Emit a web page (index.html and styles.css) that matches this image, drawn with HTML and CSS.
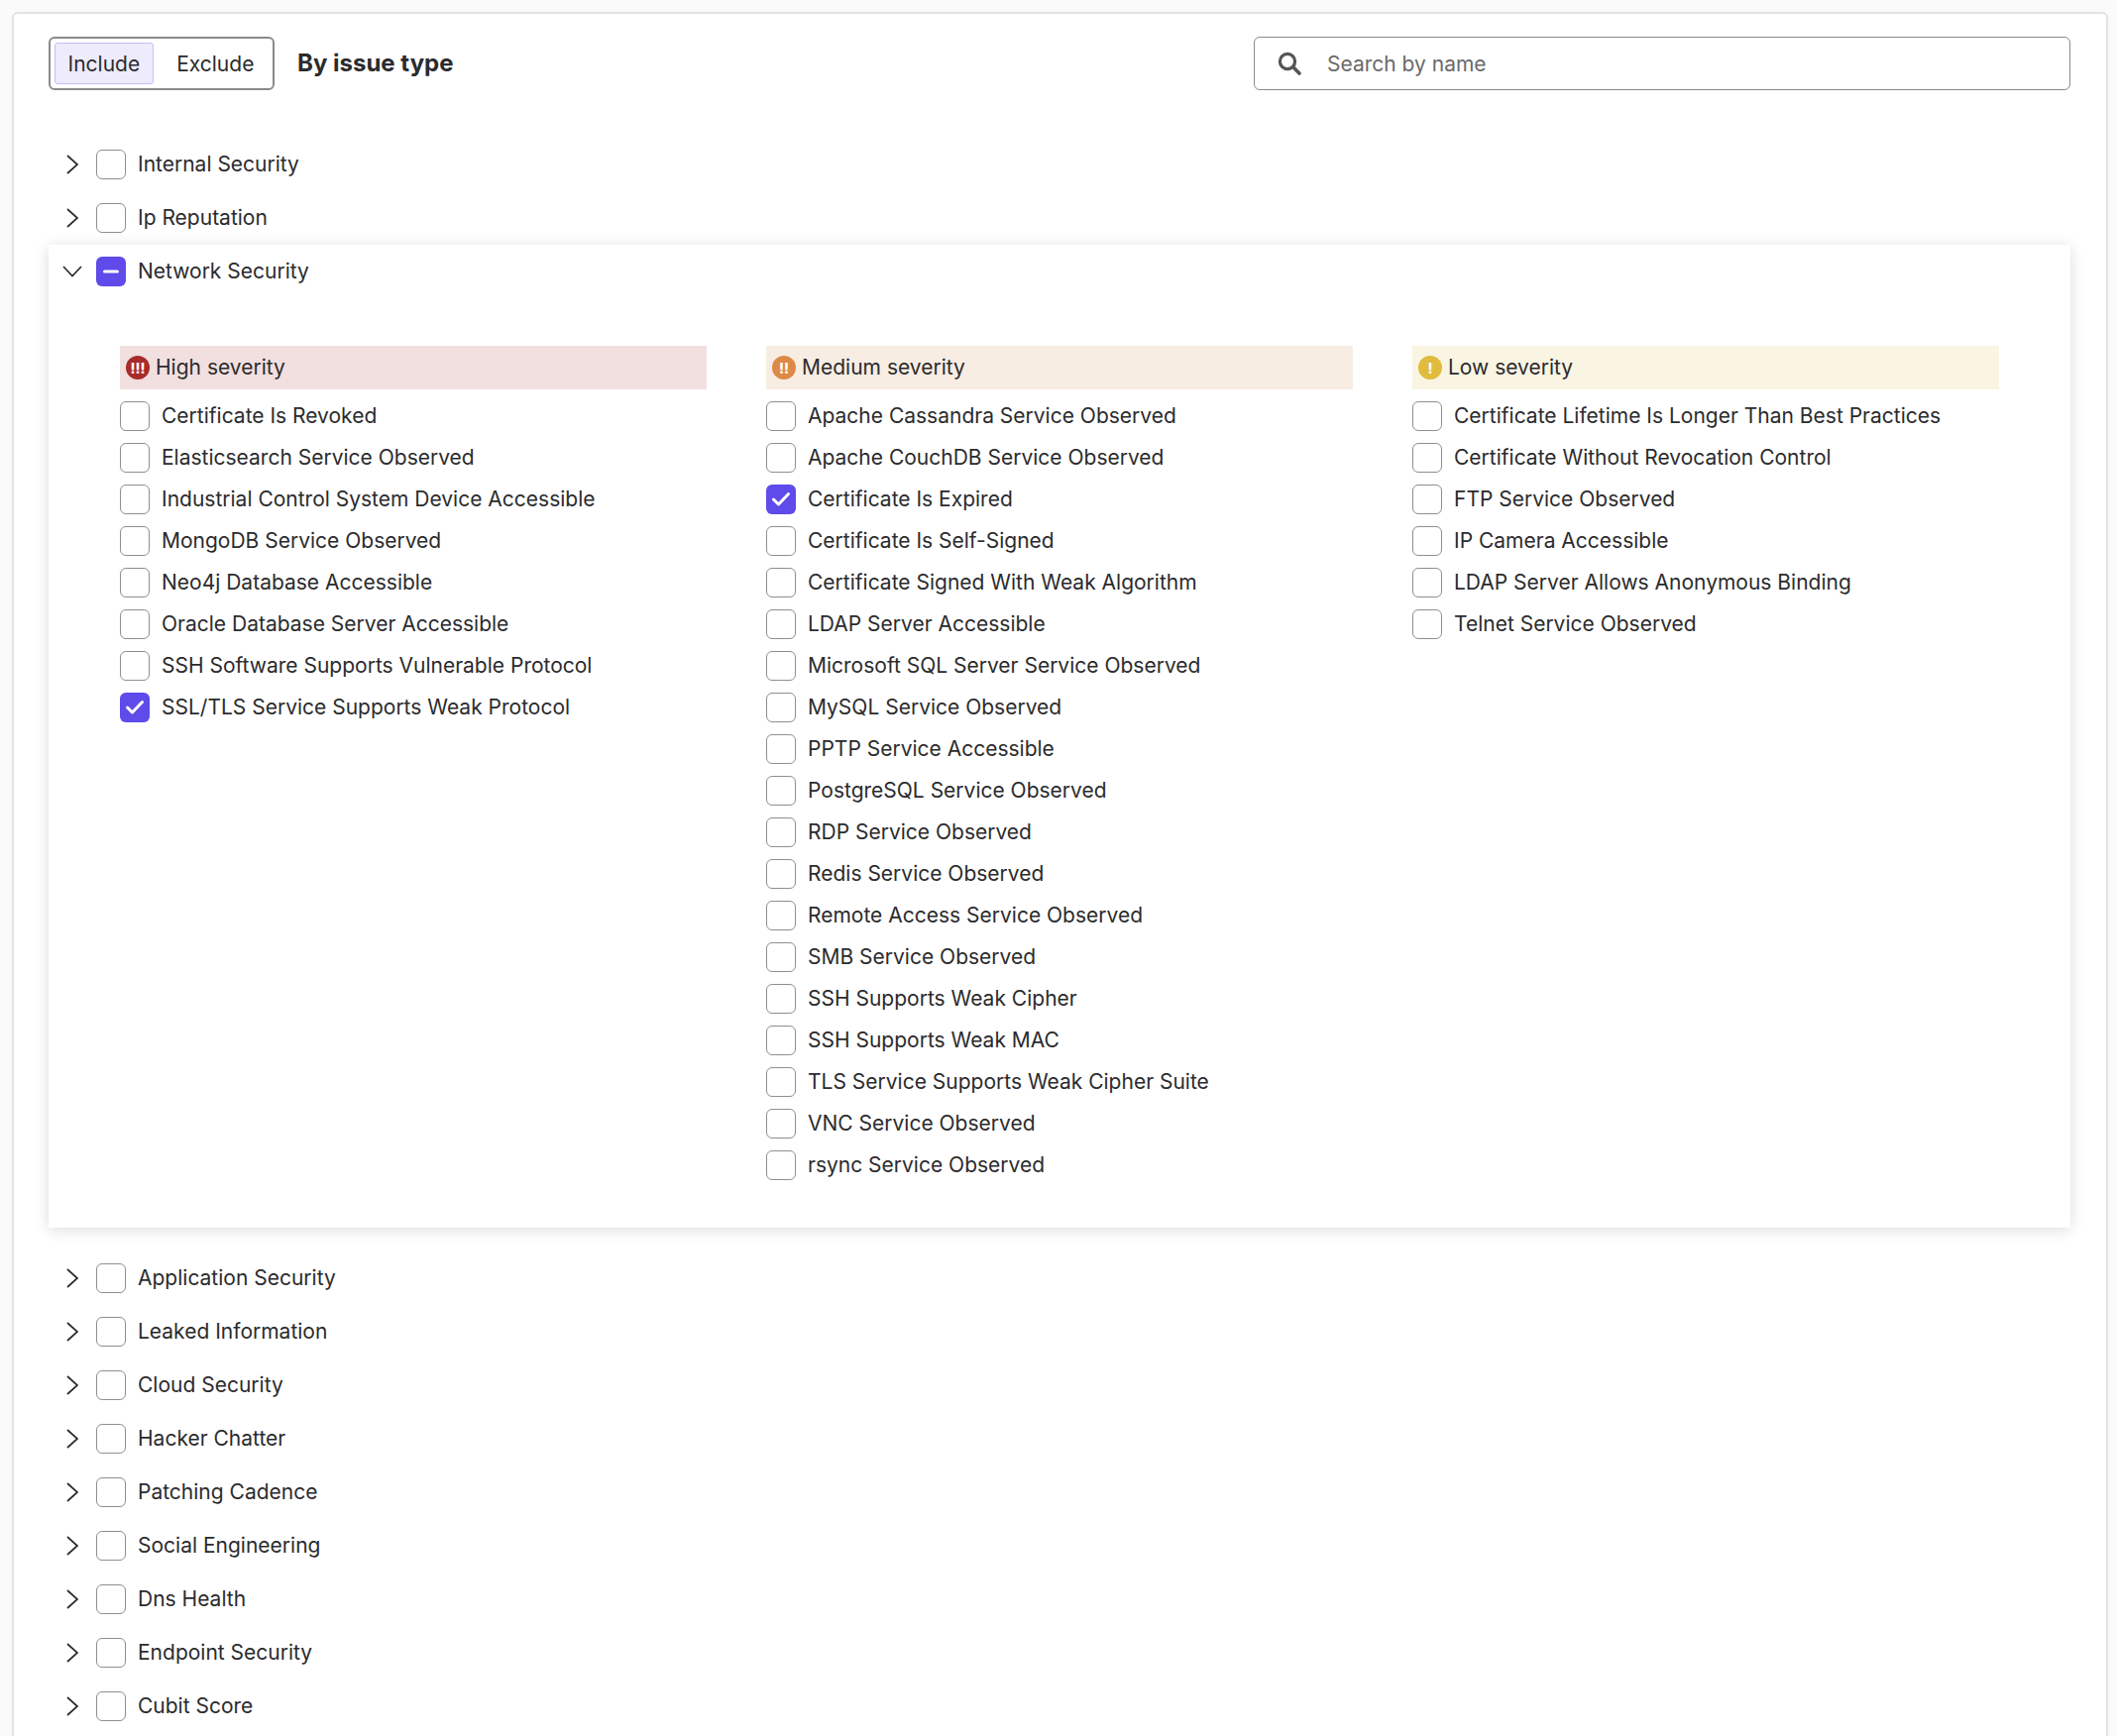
FILE: index.html
```html
<!DOCTYPE html>
<html lang="en">

<head>
    <meta charset="UTF-8">
    <title>Issue type filter</title>
    <link rel="stylesheet" href="styles.css">
</head>

<body>
    <div class="card">
        <div class="head">
            <div class="toggle">
                <span class="toggle-btn active">Include</span>
                <span class="toggle-btn">Exclude</span>
            </div>
            <div class="title">By issue type</div>
            <div class="search">
                <svg class="search-icon" viewBox="0 0 24 24"><circle cx="10" cy="10" r="7.6" fill="none" stroke="#555" stroke-width="3.2"/><path d="M15.6 15.6 L22 22" stroke="#555" stroke-width="3.6" stroke-linecap="round"/></svg>
                <input class="search-input" type="text" placeholder="Search by name">
            </div>
        </div>

        <div class="row"><svg class="chev" viewBox="0 0 24 24"><path d="M7 3 L17 12 L7 21"/></svg><span class="box"></span>Internal Security</div>
        <div class="row"><svg class="chev" viewBox="0 0 24 24"><path d="M7 3 L17 12 L7 21"/></svg><span class="box"></span>Ip Reputation</div>

        <div class="panel">
            <div class="row"><svg class="chev" viewBox="0 0 24 24"><path d="M3 7 L12 16.5 L21 7"/></svg><span class="box on"><svg viewBox="0 0 30 30"><path class="mark" d="M8.5 15 H21.5"/></svg></span>Network Security</div>
            <div class="columns">
                <div>
                    <div class="sev high"><span class="sev-icon">!!!</span>High severity</div>
                    <div class="item"><span class="box"></span>Certificate Is Revoked</div>
                    <div class="item"><span class="box"></span>Elasticsearch Service Observed</div>
                    <div class="item"><span class="box"></span>Industrial Control System Device Accessible</div>
                    <div class="item"><span class="box"></span>MongoDB Service Observed</div>
                    <div class="item"><span class="box"></span>Neo4j Database Accessible</div>
                    <div class="item"><span class="box"></span>Oracle Database Server Accessible</div>
                    <div class="item"><span class="box"></span>SSH Software Supports Vulnerable Protocol</div>
                    <div class="item"><span class="box on"><svg viewBox="0 0 30 30"><path class="mark" d="M7.5 15 L12.5 20 L22.5 9.5"/></svg></span>SSL/TLS Service Supports Weak Protocol</div>
                </div>
                <div>
                    <div class="sev medium"><span class="sev-icon">!!</span>Medium severity</div>
                    <div class="item"><span class="box"></span>Apache Cassandra Service Observed</div>
                    <div class="item"><span class="box"></span>Apache CouchDB Service Observed</div>
                    <div class="item"><span class="box on"><svg viewBox="0 0 30 30"><path class="mark" d="M7.5 15 L12.5 20 L22.5 9.5"/></svg></span>Certificate Is Expired</div>
                    <div class="item"><span class="box"></span>Certificate Is Self-Signed</div>
                    <div class="item"><span class="box"></span>Certificate Signed With Weak Algorithm</div>
                    <div class="item"><span class="box"></span>LDAP Server Accessible</div>
                    <div class="item"><span class="box"></span>Microsoft SQL Server Service Observed</div>
                    <div class="item"><span class="box"></span>MySQL Service Observed</div>
                    <div class="item"><span class="box"></span>PPTP Service Accessible</div>
                    <div class="item"><span class="box"></span>PostgreSQL Service Observed</div>
                    <div class="item"><span class="box"></span>RDP Service Observed</div>
                    <div class="item"><span class="box"></span>Redis Service Observed</div>
                    <div class="item"><span class="box"></span>Remote Access Service Observed</div>
                    <div class="item"><span class="box"></span>SMB Service Observed</div>
                    <div class="item"><span class="box"></span>SSH Supports Weak Cipher</div>
                    <div class="item"><span class="box"></span>SSH Supports Weak MAC</div>
                    <div class="item"><span class="box"></span>TLS Service Supports Weak Cipher Suite</div>
                    <div class="item"><span class="box"></span>VNC Service Observed</div>
                    <div class="item"><span class="box"></span>rsync Service Observed</div>
                </div>
                <div>
                    <div class="sev low"><span class="sev-icon">!</span>Low severity</div>
                    <div class="item"><span class="box"></span>Certificate Lifetime Is Longer Than Best Practices</div>
                    <div class="item"><span class="box"></span>Certificate Without Revocation Control</div>
                    <div class="item"><span class="box"></span>FTP Service Observed</div>
                    <div class="item"><span class="box"></span>IP Camera Accessible</div>
                    <div class="item"><span class="box"></span>LDAP Server Allows Anonymous Binding</div>
                    <div class="item"><span class="box"></span>Telnet Service Observed</div>
                </div>
            </div>
        </div>

        <div class="row"><svg class="chev" viewBox="0 0 24 24"><path d="M7 3 L17 12 L7 21"/></svg><span class="box"></span>Application Security</div>
        <div class="row"><svg class="chev" viewBox="0 0 24 24"><path d="M7 3 L17 12 L7 21"/></svg><span class="box"></span>Leaked Information</div>
        <div class="row"><svg class="chev" viewBox="0 0 24 24"><path d="M7 3 L17 12 L7 21"/></svg><span class="box"></span>Cloud Security</div>
        <div class="row"><svg class="chev" viewBox="0 0 24 24"><path d="M7 3 L17 12 L7 21"/></svg><span class="box"></span>Hacker Chatter</div>
        <div class="row"><svg class="chev" viewBox="0 0 24 24"><path d="M7 3 L17 12 L7 21"/></svg><span class="box"></span>Patching Cadence</div>
        <div class="row"><svg class="chev" viewBox="0 0 24 24"><path d="M7 3 L17 12 L7 21"/></svg><span class="box"></span>Social Engineering</div>
        <div class="row"><svg class="chev" viewBox="0 0 24 24"><path d="M7 3 L17 12 L7 21"/></svg><span class="box"></span>Dns Health</div>
        <div class="row"><svg class="chev" viewBox="0 0 24 24"><path d="M7 3 L17 12 L7 21"/></svg><span class="box"></span>Endpoint Security</div>
        <div class="row"><svg class="chev" viewBox="0 0 24 24"><path d="M7 3 L17 12 L7 21"/></svg><span class="box"></span>Cubit Score</div>
    </div>
</body>

</html>
```

FILE: styles.css
```css
html,
body {
    height: 1752px;
    overflow: hidden;
}

body {
    margin: 0;
    background: #fafafa;
    color: #2b2b2d;
    font-family: Inter, "Liberation Sans", sans-serif;
    font-size: 21px;
}

.card {
    margin: 12px 9px 0 12px;
    padding: 23px 36px 60px 35px;
    background: #fff;
    border: 2px solid #e2e2e2;
    border-radius: 6px;
}

.head {
    display: flex;
    align-items: center;
    height: 54px;
    margin-bottom: 48px;
}

.toggle {
    display: flex;
    align-items: center;
    box-sizing: border-box;
    width: 228px;
    height: 54px;
    padding: 0 4px;
    border: 2px solid #8a8a8a;
    border-radius: 6px;
}

.toggle-btn {
    height: 40px;
    line-height: 42px;
    padding: 0 12.5px;
    border: 1px solid transparent;
    border-radius: 3px;
}

.toggle-btn.active {
    margin-right: 10px;
    background: #eeebfc;
    border-color: #c6bff6;
}

.title {
    margin: 0 0 2px 23px;
    font-size: 24px;
    font-weight: 700;
}

.search {
    display: flex;
    align-items: center;
    box-sizing: border-box;
    width: 824px;
    height: 54px;
    margin-left: auto;
    padding-left: 23px;
    border: 1px solid #8a8a8a;
    border-radius: 6px;
}

.search-icon {
    width: 24px;
    height: 24px;
}

.search-input {
    flex: 1;
    margin-left: 26px;
    padding: 0;
    border: 0;
    outline: 0;
    color: #2b2b2d;
    font-family: inherit;
    font-size: 21px;
}

.search-input::placeholder {
    color: #6a6a6a;
    opacity: 1;
}

.row {
    display: flex;
    align-items: center;
    box-sizing: border-box;
    height: 54px;
    padding-bottom: 2px;
}

.chev {
    flex: none;
    width: 24px;
    height: 24px;
    margin: 2px 12px 0;
}

.chev path {
    fill: none;
    stroke: #2b2b2d;
    stroke-width: 1.7;
}

.box {
    flex: none;
    box-sizing: border-box;
    width: 30px;
    height: 30px;
    margin: 2px 12px 0 0;
    background: #fff;
    border: 1.5px solid #8f8f8f;
    border-radius: 6px;
}

.box.on {
    background: #5f4aea;
    border: 0;
}

.box svg {
    display: block;
    width: 30px;
    height: 30px;
}

.mark {
    fill: none;
    stroke: #fff;
    stroke-width: 3;
    stroke-linecap: round;
    stroke-linejoin: round;
}

.panel {
    margin-bottom: 24px;
    padding-bottom: 42px;
    background: #fff;
    box-shadow: 0 2px 14px rgba(0, 0, 0, 0.14);
}

.columns {
    display: grid;
    grid-template-columns: repeat(3, 592px);
    gap: 60px;
    margin-top: 48px;
    padding: 0 72px;
}

.sev {
    display: flex;
    align-items: center;
    box-sizing: border-box;
    height: 44px;
    margin-bottom: 6px;
    padding: 0 0 2px 6px;
}

.sev-icon {
    display: flex;
    align-items: center;
    justify-content: center;
    width: 24px;
    height: 24px;
    margin: 2px 6px 0 0;
    border-radius: 50%;
    color: #fff;
    font-size: 14px;
    font-weight: 800;
}

.high {
    background: #f2dfdf;
}

.high .sev-icon {
    background: #a82b2b;
}

.medium {
    background: #f7ede3;
}

.medium .sev-icon {
    background: #dd8a47;
}

.low {
    background: #faf4e2;
}

.low .sev-icon {
    background: #e0bb3c;
}

.item {
    display: flex;
    align-items: center;
    box-sizing: border-box;
    height: 42px;
    padding-bottom: 2px;
}
```
